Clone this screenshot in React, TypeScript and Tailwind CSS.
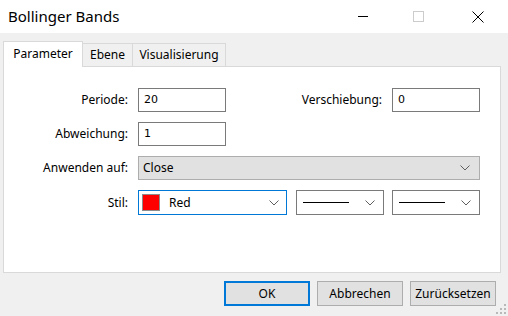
import React from 'react';

const ui = { fontFamily: '"Noto Sans", "Open Sans", sans-serif' };
const mono = { fontFamily: '"DejaVu Sans", Verdana, sans-serif' };

// Small thin chevron used in all dropdowns
const Chevron = () => (
  <svg width="10" height="6" viewBox="0 0 10 6" className="shrink-0">
    <polyline points="0.5,0.5 5,5 9.5,0.5" fill="none" stroke="#5f5f5f" strokeWidth="1" />
  </svg>
);

const TextBox = ({ value }: { value: string }) => (
  <div
    className="w-[88px] h-[24px] border border-[#7a7a7a] bg-white flex items-center pl-[5px] text-[11px] text-black"
    style={mono}
  >
    {value}
  </div>
);

const Label = ({ text, width }: { text: string; width: string }) => (
  <div className={`${width} text-right text-[12px] text-black leading-none`}>{text}</div>
);

const LineSelect = () => (
  <div className="w-[88px] h-[25px] border border-[#7a7a7a] bg-white flex items-center pl-[6px] pr-[8px] gap-[16px]">
    <div className="w-[53px] h-px bg-black" />
    <Chevron />
  </div>
);

const Button = ({ text, primary }: { text: string; primary?: boolean }) => (
  <div
    className={
      primary
        ? 'w-[86px] h-[25px] border-2 border-[#0078d7] bg-[#e1e1e1] flex items-center justify-center text-[12px] text-black'
        : 'w-[86px] h-[25px] border border-[#adadad] bg-[#e1e1e1] flex items-center justify-center text-[12px] text-black'
    }
  >
    {text}
  </div>
);

export default function App() {
  return (
    <div className="w-[508px] h-[316px] bg-[#f0f0f0] flex flex-col overflow-hidden relative select-none" style={ui}>
      {/* Title bar */}
      <div className="h-[33px] bg-white flex items-center shrink-0">
        <div className="pl-[8px] text-[15px] text-black flex-1 leading-none">Bollinger Bands</div>
        <div className="w-[10px] h-px bg-black mr-[45px]" />
        <div className="w-[11px] h-[11px] border border-[#cccccc] mr-[48px]" />
        <svg width="12" height="12" viewBox="0 0 12 12" className="mr-[24px]">
          <path d="M0.5 0.5 L11.5 11.5 M11.5 0.5 L0.5 11.5" stroke="#000" strokeWidth="1" />
        </svg>
      </div>

      {/* Tabs */}
      <div className="flex items-end h-[25px] mt-[8px] pl-[3px] shrink-0">
        <div className="relative z-10 w-[80px] h-[26px] -mb-px bg-white border border-b-0 border-[#d9d9d9] flex items-center justify-center text-[12px] text-black pb-[2px]">
          Parameter
        </div>
        <div className="w-[51px] h-[23px] -ml-px bg-[#f0f0f0] border border-b-0 border-[#d9d9d9] flex items-center justify-center text-[12px] text-black">
          Ebene
        </div>
        <div className="w-[94px] h-[23px] -ml-px bg-[#f0f0f0] border border-b-0 border-[#d9d9d9] flex items-center justify-center text-[12px] text-black">
          Visualisierung
        </div>
      </div>

      {/* Panel */}
      <div className="ml-[3px] w-[498px] h-[207px] bg-white border border-[#d9d9d9] pt-[21px] flex flex-col gap-[10px] shrink-0">
        <div className="flex items-center">
          <Label text="Periode:" width="w-[124px]" />
          <div className="ml-[10px]">
            <TextBox value="20" />
          </div>
          <Label text="Verschiebung:" width="w-[156px]" />
          <div className="ml-[10px]">
            <TextBox value="0" />
          </div>
        </div>

        <div className="flex items-center">
          <Label text="Abweichung:" width="w-[124px]" />
          <div className="ml-[10px]">
            <TextBox value="1" />
          </div>
        </div>

        <div className="flex items-center">
          <Label text="Anwenden auf:" width="w-[124px]" />
          <div className="ml-[10px] w-[342px] h-[24px] border border-[#adadad] bg-[#e1e1e1] flex items-center pl-[4px] pr-[9px] text-[12px] text-black">
            <span className="flex-1">Close</span>
            <Chevron />
          </div>
        </div>

        <div className="flex items-center">
          <Label text="Stil:" width="w-[124px]" />
          <div className="ml-[10px] w-[149px] h-[25px] border border-[#0078d7] bg-white flex items-center pl-[3px] pr-[7px] text-[12px] text-black">
            <div className="w-[18px] h-[17px] bg-[#ff0000] border border-[#8c8c8c]" />
            <span className="flex-1 pl-[9px]">Red</span>
            <Chevron />
          </div>
          <div className="ml-[9px]">
            <LineSelect />
          </div>
          <div className="ml-[8px]">
            <LineSelect />
          </div>
        </div>
      </div>

      {/* Buttons */}
      <div className="flex justify-end gap-[7px] mt-[8px] pr-[12px]">
        <Button text="OK" primary />
        <Button text="Abbrechen" />
        <Button text="Zurücksetzen" />
      </div>

      {/* Resize grip */}
      <svg width="12" height="12" viewBox="0 0 12 12" className="absolute right-[1px] bottom-[1px]">
        <rect x="9" y="1" width="2" height="2" fill="#b8b8b8" />
        <rect x="5" y="5" width="2" height="2" fill="#b8b8b8" />
        <rect x="9" y="5" width="2" height="2" fill="#b8b8b8" />
        <rect x="1" y="9" width="2" height="2" fill="#b8b8b8" />
        <rect x="5" y="9" width="2" height="2" fill="#b8b8b8" />
        <rect x="9" y="9" width="2" height="2" fill="#b8b8b8" />
      </svg>
    </div>
  );
}
